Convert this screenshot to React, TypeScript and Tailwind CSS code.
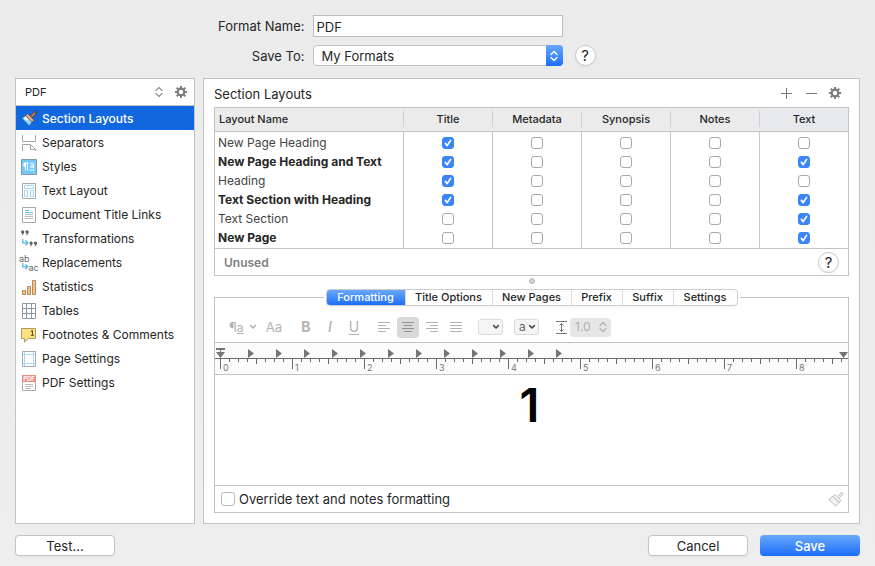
import { useState } from "react";
import type { ReactNode } from "react";

type Layout = { name: string; used: boolean; checks: boolean[] };

const COLUMNS = ["Title", "Metadata", "Synopsis", "Notes", "Text"];

const LAYOUTS: Layout[] = [
  { name: "New Page Heading", used: false, checks: [true, false, false, false, false] },
  { name: "New Page Heading and Text", used: true, checks: [true, false, false, false, true] },
  { name: "Heading", used: false, checks: [true, false, false, false, false] },
  { name: "Text Section with Heading", used: true, checks: [true, false, false, false, true] },
  { name: "Text Section", used: false, checks: [false, false, false, false, true] },
  { name: "New Page", used: true, checks: [false, false, false, false, true] },
];

function Gear() {
  return (
    <svg viewBox="0 0 14 14" className="size-[14px]" fill="none" stroke="#7d7d7d" aria-hidden="true">
      <circle cx="7" cy="7" r="3.3" strokeWidth="2.2" />
      {[0, 45, 90, 135, 180, 225, 270, 315].map((a) => (
        <path key={a} d="M7 3.2V0.9" strokeWidth="2" transform={`rotate(${a} 7 7)`} />
      ))}
    </svg>
  );
}

function UpDown({ color }: { color: string }) {
  return (
    <svg viewBox="0 0 10 12" className="h-3 w-[10px]" fill="none" stroke={color} strokeWidth="1.4" strokeLinecap="round" strokeLinejoin="round" aria-hidden="true">
      <path d="M2 4.4 5 1.6 8 4.4M2 7.6 5 10.4 8 7.6" />
    </svg>
  );
}

function Chevron({ color }: { color: string }) {
  return (
    <svg viewBox="0 0 8 6" className="h-[6px] w-2" fill="none" stroke={color} strokeWidth="1.5" strokeLinecap="round" strokeLinejoin="round" aria-hidden="true">
      <path d="M1.6 1.6 4 4 6.4 1.6" />
    </svg>
  );
}

function Icon({ children }: { children: ReactNode }) {
  return (
    <svg viewBox="0 0 18 18" className="size-[18px] shrink-0 overflow-visible" fill="none" aria-hidden="true">
      {children}
    </svg>
  );
}

const hookArrow = (
  <path d="M2.8 9V12.8H7.6M5.4 10.4 7.8 12.8 5.4 15.2" stroke="#4fb9ee" strokeWidth="1.3" />
);

const sheet = <path d="M2.5 1.5H15.5V16.5H2.5Z" fill="#fff" stroke="#a9a9a9" />;

const quotes = (
  <g fill="#5e5e5e">
    <circle r="1.6" cx="1.6" cy="1.6" />
    <path d="M3.2 1.4Q3.2 4 1 5.1L.7 4.6Q1.6 3.7 1.5 2Z" />
    <circle r="1.6" cx="6" cy="1.6" />
    <path d="M7.6 1.4Q7.6 4 5.4 5.1L5.1 4.6Q6 3.7 5.9 2Z" />
  </g>
);

const SECTIONS: { label: string; icon: ReactNode }[] = [
  {
    label: "Section Layouts",
    icon: (
      <>
        <path d="M11.6 6.4 15.8 2.2" stroke="#6b4630" strokeWidth="3" strokeLinecap="round" />
        <path d="M11.8 6.2 15.4 2.6" stroke="#c98862" strokeWidth="1.4" strokeLinecap="round" />
        <circle cx="15.6" cy="2.4" r=".7" fill="#32414f" />
        <path d="M6 5.4 2 8.2 9.2 15.8 12.4 11.6Z" fill="#8fd6fb" stroke="#3b6f98" strokeWidth=".7" />
        <path d="M5.4 6.6 3.4 8.2 6 10.8 8.6 10Z" fill="#e3f6ff" />
        <path d="M7.6 3.8 5.8 5.6 12.2 12 14 10.2Z" fill="#f0b98e" stroke="#70492f" strokeWidth=".8" />
      </>
    ),
  },
  {
    label: "Separators",
    icon: (
      <path d="M2.5 1V7.5H15.5V1M2.5 17V10.5H10.5L15.5 15.5V17M10.5 10.5V15.5H15.5" stroke="#a6a6a6" />
    ),
  },
  {
    label: "Styles",
    icon: (
      <>
        <path d="M1.5 1.5H16.5V16.5H1.5Z" fill="#75c8fa" stroke="#7b9cb0" />
        <path d="M7.5 5V12.5M5.5 5V12.5M8.5 4.9H5" stroke="#fff" />
        <path d="M5.5 4.4A2.3 2.3 0 0 0 5.5 9Z" fill="#fff" />
        <path d="M10.4 5.6Q13.6 4.2 13.6 6.4V10M13.5 7.4Q10.2 7.2 10.2 8.8 10.6 10.4 13.5 8.8M9.5 12H14.5" stroke="#fff" />
      </>
    ),
  },
  {
    label: "Text Layout",
    icon: (
      <>
        {sheet}
        <path d="M4.5 3.5H13.5V6.5H4.5ZM4.5 8.5H7.5V14.5H4.5ZM10.5 8.5H13.5V14.5H10.5Z" stroke="#a5d8f6" />
      </>
    ),
  },
  {
    label: "Document Title Links",
    icon: (
      <>
        {sheet}
        <path d="M5 4.5H9M5 6.5H13" stroke="#5fbdf0" />
        <path d="M5 8.5H13M5 10.5H13M5 12.5H13" stroke="#bdbdbd" />
      </>
    ),
  },
  {
    label: "Transformations",
    icon: (
      <>
        <g transform="translate(1 .2)">{quotes}</g>
        {hookArrow}
        <g transform="translate(9.4 11.4)">{quotes}</g>
      </>
    ),
  },
  {
    label: "Replacements",
    icon: (
      <>
        <text x="-1" y="7.5" fontSize="9" fill="#666">ab</text>
        {hookArrow}
        <text x="8.5" y="17" fontSize="9" fill="#666">ac</text>
      </>
    ),
  },
  {
    label: "Statistics",
    icon: (
      <path d="M2.5 12.5H5.5V16.5H2.5ZM7.5 8.5H10.5V16.5H7.5ZM12.5 2.5H15.5V16.5H12.5Z" fill="#fbc580" stroke="#ad8a64" />
    ),
  },
  {
    label: "Tables",
    icon: (
      <path d="M2.5 1.5H15.5V16.5H2.5ZM6.5 1.5V16.5M11.5 1.5V16.5M2.5 6.5H15.5M2.5 11.5H15.5" fill="#fff" stroke="#8b9ba2" />
    ),
  },
  {
    label: "Footnotes & Comments",
    icon: (
      <>
        <path d="M1.5 2.5H15.5V12.5H8.5L4.5 16V12.5H1.5Z" fill="#ffe27c" stroke="#ab9c6c" />
        <path d="M10.8 5.4 12.4 4.5V9.3M11 9.3H13.8" stroke="#4a4327" />
      </>
    ),
  },
  {
    label: "Page Settings",
    icon: (
      <>
        {sheet}
        <path d="M4.5 2V16M13.5 2V16M3 4.5H15M3 13.5H15" stroke="#a5dbf8" />
      </>
    ),
  },
  {
    label: "PDF Settings",
    icon: (
      <>
        {sheet}
        <path d="M2 1H16V8H2Z" fill="#ee8b7b" />
        <text x="9" y="6.6" fontSize="6" fontWeight="700" textAnchor="middle" fill="#fff">PDF</text>
        <path d="M5 10.5H13M5 12.5H13M5 14.5H11" stroke="#bdbdbd" />
      </>
    ),
  },
];

const TABS = [
  { label: "Formatting", width: "w-[78px]" },
  { label: "Title Options", width: "w-[87px]" },
  { label: "New Pages", width: "w-[79px]" },
  { label: "Prefix", width: "w-[51px]" },
  { label: "Suffix", width: "w-[51px]" },
  { label: "Settings", width: "w-[64px]" },
];

function HelpButton() {
  return (
    <button type="button" aria-label="Help" className="flex size-[21px] shrink-0 items-center justify-center rounded-full border border-[#c6c6c6] bg-white text-[15px] leading-none text-[#262626] shadow-xs">
      ?
    </button>
  );
}

function CheckBox({ label, on, onToggle }: { label: string; on: boolean; onToggle: () => void }) {
  return (
    <span className="relative mx-auto block size-3">
      <input
        type="checkbox"
        aria-label={label}
        checked={on}
        onChange={onToggle}
        className="block size-3 appearance-none rounded-[3px] border border-[#a9a9a9] bg-white checked:border-[#3b86f7] checked:bg-[#3b86f7]"
      />
      {on && (
        <svg viewBox="0 0 12 12" className="pointer-events-none absolute inset-0 size-3" fill="none" stroke="#fff" strokeWidth="1.7" strokeLinecap="round" strokeLinejoin="round" aria-hidden="true">
          <path d="M3.4 6.4 5.2 8.6 8.6 3.4" />
        </svg>
      )}
    </span>
  );
}

function Ruler() {
  const ticks = Array.from({ length: 70 }, (_, i) => i);
  return (
    <svg className="block h-[31px] w-full shrink-0 bg-[#fbfbfb]" aria-hidden="true">
      <rect x="0" y="15" width="100%" height="1" fill="#6a6a6a" />
      {ticks.map((i) => (
        <rect key={i} x={5 + i * 9} y="16" width="1" height={i % 8 === 0 ? 10 : i % 4 === 0 ? 5 : 3} fill="#6a6a6a" />
      ))}
      {[0, 1, 2, 3, 4, 5, 6, 7, 8].map((n) => (
        <text key={n} x={8 + n * 72} y="28" fontSize="9" fill="#777">
          {n}
        </text>
      ))}
      {ticks.slice(0, 12).map((i) => (
        <path key={i} d="M0 0 6 4.5 0 9Z" fill="#757575" transform={`translate(${33 + i * 28} 6)`} />
      ))}
      <path d="M1 5H10V7H6V9H10L5.5 15 1 9H5V7H1Z" fill="#757575" />
      <svg x="100%" overflow="visible">
        <path d="M-9 9H0L-4.5 15Z" fill="#757575" />
      </svg>
    </svg>
  );
}

function AlignIcon({ lines }: { lines: string }) {
  return (
    <svg viewBox="0 0 12 10" className="h-[10px] w-3" fill="none" stroke="currentColor" aria-hidden="true">
      <path d={lines} />
    </svg>
  );
}

const ALIGNS = [
  { label: "Align left", lines: "M0 .5H12M0 3.5H8M0 6.5H12M0 9.5H8" },
  { label: "Center", lines: "M0 .5H12M2 3.5H10M0 6.5H12M2 9.5H10" },
  { label: "Align right", lines: "M0 .5H12M4 3.5H12M0 6.5H12M4 9.5H12" },
  { label: "Justify", lines: "M0 .5H12M0 3.5H12M0 6.5H12M0 9.5H12" },
];

function FormatBar() {
  const [align, setAlign] = useState("Center");
  return (
    <div className="flex h-[37px] shrink-0 items-center border-b border-[#c3c3c3] pt-[6px] pl-[14px] text-[#b3b3b3]">
      <button type="button" aria-label="Paragraph style" className="flex w-7 items-center justify-between text-[13px] leading-4">
        <span>¶<span className="text-[12px] underline">a</span></span>
        <Chevron color="#b3b3b3" />
      </button>
      <button type="button" aria-label="Font" className="ml-2 w-[18px] text-[13px] leading-4">Aa</button>
      <button type="button" aria-label="Bold" className="ml-[11px] w-6 text-[14px] leading-4 font-bold">B</button>
      <button type="button" aria-label="Italic" className="w-6 text-[14px] leading-4 font-medium italic">I</button>
      <button type="button" aria-label="Underline" className="w-6 text-[14px] leading-4 underline underline-offset-2">U</button>
      <div className="ml-[7px] flex gap-[2px]">
        {ALIGNS.map((a) => (
          <button
            key={a.label}
            type="button"
            aria-label={a.label}
            onClick={() => setAlign(a.label)}
            className={`flex h-[21px] w-[22px] items-center justify-center rounded-[4px] ${a.label === align ? "bg-[#d9d9d9] text-[#8f8f8f]" : ""}`}
          >
            <AlignIcon lines={a.lines} />
          </button>
        ))}
      </div>
      <button type="button" aria-label="Text color" className="ml-[11px] flex h-4 w-[25px] items-center justify-end rounded-[3px] border border-[#dadada] bg-[#f5f5f5] pr-[2px]">
        <Chevron color="#444" />
      </button>
      <button type="button" aria-label="Highlight color" className="ml-[11px] flex h-4 w-[25px] items-center justify-between rounded-[3px] border border-[#dadada] bg-[#f5f5f5] pr-[2px] pl-1 text-[12px] leading-3 text-[#666]">
        <span>a</span>
        <Chevron color="#444" />
      </button>
      <label className="ml-[17px] flex items-center gap-[3px]">
        <svg viewBox="0 0 11 13" className="h-[13px] w-[11px]" fill="none" stroke="#777" role="img" aria-label="Line spacing">
          <path d="M0 .5H11M0 12.5H11M5.5 2.5V10.5M3.5 4.5 5.5 2.5 7.5 4.5M3.5 8.5 5.5 10.5 7.5 8.5" />
        </svg>
        <span className="flex h-[19px] w-[41px] items-center justify-between rounded-[4px] bg-[#e6e6e6] pr-[3px] pl-[5px]">
          <input defaultValue="1.0" className="w-5 bg-transparent text-[12px] leading-4 text-[#b0b0b0]" />
          <UpDown color="#b5b5b5" />
        </span>
      </label>
    </div>
  );
}

export default function App() {
  const [section, setSection] = useState("Section Layouts");
  const [tab, setTab] = useState("Formatting");
  const [layouts, setLayouts] = useState(LAYOUTS);
  const [override, setOverride] = useState(false);

  const toggle = (row: number, col: number) =>
    setLayouts((all) =>
      all.map((l, r) => (r === row ? { ...l, checks: l.checks.map((c, k) => (k === col ? !c : c)) } : l)),
    );

  return (
    <div className="flex min-h-screen flex-col bg-linear-to-b from-[#ebebeb] to-[#eeeeee] px-[15px] pt-[15px] pb-[10px] font-['Inter',sans-serif] text-[12px] leading-4 text-[#262626]">
      <form className="grid grid-cols-[1fr_250px_1fr] items-center gap-2">
        <label htmlFor="format-name" className="text-right text-[13px]">Format Name:</label>
        <input id="format-name" defaultValue="PDF" className="h-[22px] border border-[#bdbdbd] bg-white px-[3px] pt-[2px] text-[13px]" />
        <span />
        <label htmlFor="save-to" className="text-right text-[13px]">Save To:</label>
        <div className="relative">
          <select id="save-to" className="block h-[21px] w-full appearance-none rounded-[4px] border border-[#c4c4c4] bg-white pl-2 text-[13px] leading-4">
            <option>My Formats</option>
          </select>
          <span className="pointer-events-none absolute inset-y-0 right-0 flex w-[17px] items-center justify-center rounded-r-[4px] bg-linear-to-b from-[#68a8fa] to-[#1a6dfb]">
            <UpDown color="#fff" />
          </span>
        </div>
        <div className="ml-1">
          <HelpButton />
        </div>
      </form>

      <div className="mt-3 flex flex-1 gap-2">
        <aside className="flex w-[180px] shrink-0 flex-col border border-[#c3c3c3] bg-white">
          <div className="flex h-[27px] items-center border-b border-[#c3c3c3] pr-[6px] pl-[9px]">
            <div className="relative flex-1">
              <select aria-label="Compile for" className="block w-full appearance-none bg-transparent text-[11px] leading-4">
                <option>PDF</option>
              </select>
              <span className="pointer-events-none absolute inset-y-0 right-[6px] flex items-center">
                <UpDown color="#9a9a9a" />
              </span>
            </div>
            <button type="button" aria-label="Options" className="ml-1">
              <Gear />
            </button>
          </div>
          <nav className="flex flex-col">
            {SECTIONS.map((s) => (
              <button
                key={s.label}
                type="button"
                onClick={() => setSection(s.label)}
                className={`flex h-6 items-center gap-1 pt-[2px] pl-1 text-left ${s.label === section ? "bg-[#1167de] font-medium text-white" : ""}`}
              >
                <Icon>{s.icon}</Icon>
                {s.label}
              </button>
            ))}
          </nav>
        </aside>

        <main className="flex min-w-0 flex-1 flex-col border border-[#c3c3c3] bg-white px-[10px] pb-[10px]">
          <div className="flex h-7 items-center pt-[2px] pr-[7px]">
            <h1 className="flex-1 text-[13px]">Section Layouts</h1>
            <div className="flex items-center gap-[11px] pb-[2px] text-[#777]">
              <button type="button" aria-label="Add layout" className="mr-[3px]">
                <svg viewBox="0 0 11 11" className="size-[11px]" stroke="currentColor"><path d="M5.5 0V11M0 5.5H11" /></svg>
              </button>
              <button type="button" aria-label="Remove layout">
                <svg viewBox="0 0 11 11" className="size-[11px]" stroke="currentColor"><path d="M0 5.5H11" /></svg>
              </button>
              <button type="button" aria-label="Layout options">
                <Gear />
              </button>
            </div>
          </div>

          <div className="border border-[#c3c3c3]">
            <table className="w-full table-fixed border-separate border-spacing-0">
              <thead>
                <tr className="bg-[#ebebeb] text-[11px]">
                  <th className="h-6 border-b border-[#c3c3c3] p-0 pb-[1px] pl-1 text-left font-medium">Layout Name</th>
                  {COLUMNS.map((c) => (
                    <th key={c} className="h-6 w-[89px] border-b border-[#c3c3c3] p-0 pb-[1px] font-medium last:bg-[#e8e9ed]">
                      <div className="border-l border-[#cfcfcf]">{c}</div>
                    </th>
                  ))}
                </tr>
              </thead>
              <tbody className="[&>tr:first-child>*]:pt-[1px] [&>tr:last-child>*]:pb-[1px]">
                {layouts.map((l, r) => (
                  <tr key={l.name}>
                    <th scope="row" className={`truncate p-0 pl-[3px] text-left leading-[19px] ${l.used ? "font-bold" : "font-normal text-[#444]"}`}>
                      {l.name}
                    </th>
                    {l.checks.map((on, c) => (
                      <td key={COLUMNS[c]} className="border-l border-[#c9c9c9] p-0">
                        <CheckBox label={`${l.name}: ${COLUMNS[c]}`} on={on} onToggle={() => toggle(r, c)} />
                      </td>
                    ))}
                  </tr>
                ))}
              </tbody>
            </table>
            <div className="flex h-[27px] items-center justify-between border-t border-[#c3c3c3] pr-[9px] pl-[9px]">
              <span className="pt-[2px] font-semibold text-[#808080]">Unused</span>
              <HelpButton />
            </div>
          </div>

          <div className="mx-auto mt-[2px] mb-[5px] size-[6px] shrink-0 rounded-full border border-[#b5b5b5] bg-[#d5d5d5]" />

          <fieldset className="flex flex-1 flex-col border border-[#c3c3c3]">
            <legend className="mx-auto px-[2px]">
              <div className="flex h-[17px] rounded-[4px] border border-[#cdcdcd] text-[11px] leading-[15px] font-medium shadow-xs">
                {TABS.map((t) => (
                  <button
                    key={t.label}
                    type="button"
                    onClick={() => setTab(t.label)}
                    className={`${t.width} border-[#dcdcdc] first:rounded-l-[3px] not-first:border-l ${t.label === tab ? "bg-linear-to-b from-[#68a8fa] to-[#1a6dfb] text-white" : ""}`}
                  >
                    {t.label}
                  </button>
                ))}
              </div>
            </legend>
            <FormatBar />
            <Ruler />
            <textarea
              aria-label="Formatting preview"
              rows={1}
              defaultValue="1"
              className="block w-full flex-1 resize-none border-y border-[#c3c3c3] bg-white pt-[1px] pr-1 text-center text-[47px] leading-[58px] font-semibold text-black"
            />
            <div className="flex h-[26px] shrink-0 items-center justify-between pr-1 pl-[6px]">
              <label className="flex items-center gap-1 text-[13px]">
                <input
                  type="checkbox"
                  checked={override}
                  onChange={() => setOverride(!override)}
                  className="size-[14px] appearance-none rounded-[3px] border border-[#b9b9b9] bg-white checked:bg-[#3b86f7]"
                />
                Override text and notes formatting
              </label>
              <button type="button" aria-label="Clear formatting">
                <svg viewBox="0 0 16 16" className="size-4" fill="#f3f3f3" stroke="#b9b9b9" strokeLinejoin="round">
                  <path d="M10 5 13.6 1.2 15.2 2.8 11.4 6.4" />
                  <path d="M4.8 5.2 1 8.6 7.6 15.2 11 11.4Z" />
                  <path d="M7 3.4 5 5.4 11 11.4 13 9.4Z" />
                </svg>
              </button>
            </div>
          </fieldset>
        </main>
      </div>

      <div className="mt-[11px] flex h-[21px] gap-3 text-[13px]">
        <button type="button" className="mr-auto w-[100px] rounded-[4px] border border-[#c4c4c4] bg-white shadow-xs">Test...</button>
        <button type="button" className="w-[100px] rounded-[4px] border border-[#c4c4c4] bg-white shadow-xs">Cancel</button>
        <button type="button" className="w-[100px] rounded-[4px] bg-linear-to-b from-[#68a8fa] to-[#1a6dfb] font-medium text-white shadow-xs">Save</button>
      </div>
    </div>
  );
}
